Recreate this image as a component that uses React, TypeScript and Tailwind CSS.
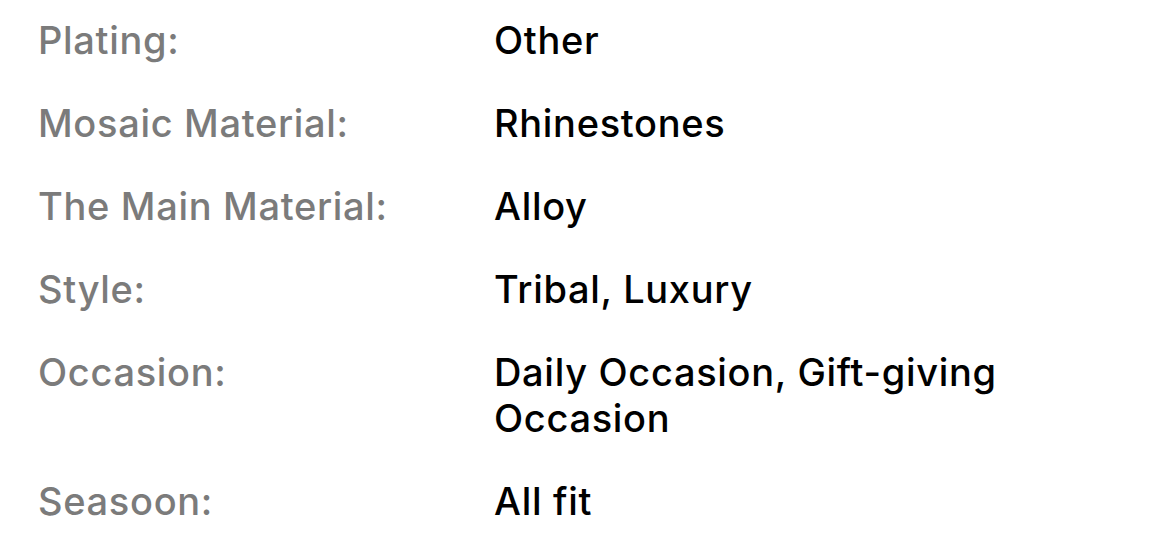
import React from "react";

const rows: [string, string][] = [
  ["Plating:", "Other"],
  ["Mosaic Material:", "Rhinestones"],
  ["The Main Material:", "Alloy"],
  ["Style:", "Tribal, Luxury"],
  ["Occasion:", "Daily Occasion, Gift-giving Occasion"],
  ["Seasoon:", "All fit"],
];

export default function App() {
  return (
    <div
      className="w-[1170px] h-[556px] bg-white pt-[17px] pl-[38px] overflow-hidden"
      style={{ fontFamily: "Inter, 'Noto Sans', sans-serif" }}
    >
      <div className="flex flex-col gap-[37px]">
        {rows.map(([k, v]) => (
          <div key={k} className="flex text-[38px] leading-[46px] font-medium tracking-[0.018em]">
            <div className="w-[456px] shrink-0 text-[#7b7b7b]">{k}</div>
            <div className="w-[560px] text-black">{v}</div>
          </div>
        ))}
      </div>
    </div>
  );
}
